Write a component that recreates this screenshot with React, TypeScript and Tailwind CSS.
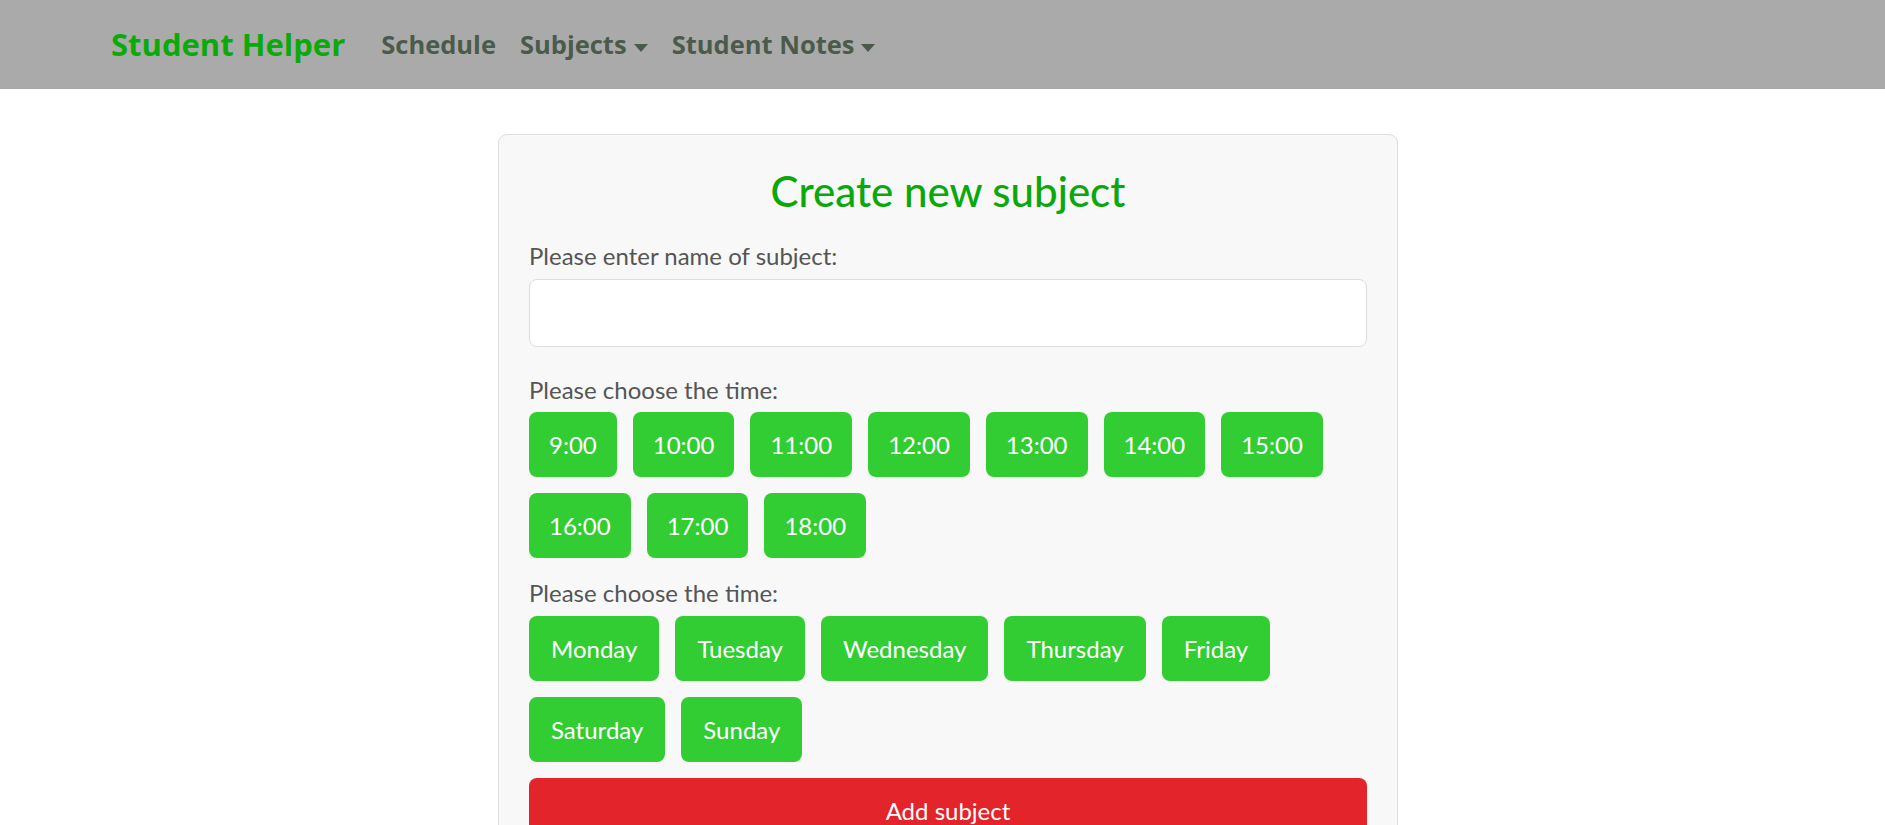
import { useState } from "react";

const times = ["9:00", "10:00", "11:00", "12:00", "13:00", "14:00", "15:00", "16:00", "17:00", "18:00"];
const days = ["Monday", "Tuesday", "Wednesday", "Thursday", "Friday", "Saturday", "Sunday"];

function Caret() {
  return (
    <span className="ml-[7px] inline-block align-middle border-t-[8px] border-x-[7px] border-x-transparent border-t-[#4b5b4b]" />
  );
}

export default function App() {
  const [name, setName] = useState("");

  return (
    <div className="min-h-screen bg-white font-['Segoe_UI',Lato,'Noto_Sans',sans-serif]">
      <nav className="h-[89px] bg-[#aaaaaa] flex items-center pl-[111px] font-['Open_Sans',sans-serif]">
        <a href="#" className="mr-[24px] text-[31px] font-bold text-[#0aaa0a]">
          Student Helper
        </a>
        <ul className="flex items-center text-[25.5px] font-bold text-[#4b5b4b]">
          <li>
            <a href="#" className="px-[12px]">Schedule</a>
          </li>
          <li>
            <a href="#" className="px-[12px]">
              Subjects
              <Caret />
            </a>
          </li>
          <li>
            <a href="#" className="px-[12px]">
              Student Notes
              <Caret />
            </a>
          </li>
        </ul>
      </nav>

      <main className="pt-[45px]">
        <div className="ml-[498px] w-[900px] rounded-[9px] border border-[#dfdfdf] bg-[#f8f8f8] px-[30px] pt-[31px] pb-[30px]">
          <h3 className="mb-[22px] text-center text-[42px] font-medium leading-[1.2] text-[#0aa80a]">
            Create new subject
          </h3>

          <label className="mb-[5px] block text-[24px] leading-[36px] text-[#555]">
            Please enter name of subject:
          </label>
          <input
            value={name}
            onChange={(e) => setName(e.target.value)}
            className="block h-[68px] w-full rounded-[8px] border border-[#dedede] bg-white px-[18px] text-[24px] outline-none"
          />

          <label className="mt-[25px] mb-[4px] block text-[24px] leading-[36px] text-[#555]">
            Please choose the time:
          </label>
          <div className="flex flex-wrap gap-[16px]">
            {times.map((t) => (
              <button
                key={t}
                className="h-[65px] rounded-[8px] bg-[#32cd32] px-[20px] text-[24px] text-white"
              >
                {t}
              </button>
            ))}
          </div>

          <label className="mt-[17px] mb-[5px] block text-[24px] leading-[36px] text-[#555]">
            Please choose the time:
          </label>
          <div className="flex flex-wrap gap-[16px]">
            {days.map((d) => (
              <button
                key={d}
                className="h-[65px] rounded-[8px] bg-[#32cd32] px-[22px] text-[24px] text-white"
              >
                {d}
              </button>
            ))}
          </div>

          <button className="mt-[16px] h-[65px] w-full rounded-[8px] bg-[#e3242b] text-[24px] text-white">
            Add subject
          </button>
        </div>
      </main>
    </div>
  );
}
